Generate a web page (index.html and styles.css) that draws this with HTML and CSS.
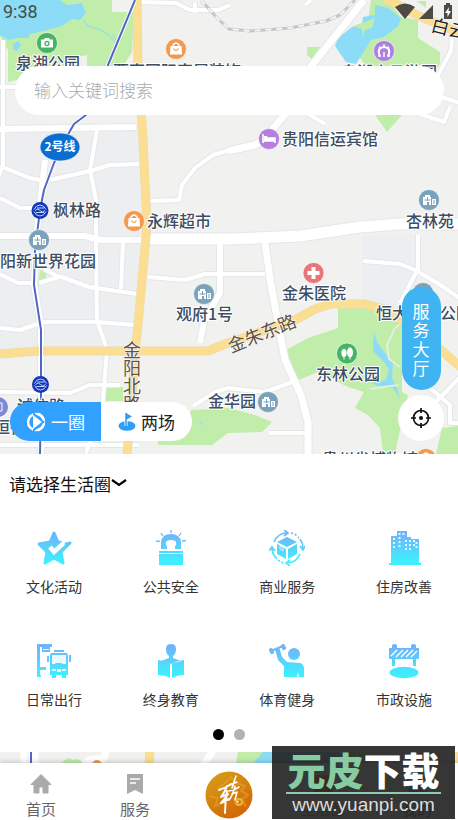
FILE: index.html
```html
<!DOCTYPE html>
<html lang="zh-CN">
<head>
    <meta charset="UTF-8">
    <meta name="viewport" content="width=device-width, initial-scale=1.0">
    <title>生活圈</title>
    <link rel="stylesheet" href="styles.css">
</head>
<body>
<div class="app">

    <!-- Map -->
    <svg class="map" viewBox="0 0 458 820" preserveAspectRatio="xMidYMin slice" aria-hidden="true">
        <defs>
            <linearGradient id="sky" gradientUnits="userSpaceOnUse" x1="0" y1="0" x2="0" y2="36">
                <stop offset="0.1" stop-color="#70b4fa"/>
                <stop offset="0.9" stop-color="#3df0ff"/>
            </linearGradient>
            <g id="building">
                <circle r="10.5" fill="#7aa3bb" stroke="#fff" stroke-width="0.6"/>
                <path fill="#fff" d="M-6 5V-3h2v-2h5v2h1V5h-2V2h-2v3zM3 5V-1h4V5z"/>
                <path stroke="#7aa3bb" d="M-4.500 0h6M-1.500-3v4M4 1h2M4 3h2" fill="none"/>
            </g>
            <g id="bag">
                <circle r="10.500" fill="#f29a50" stroke="#fff" stroke-width="0.6"/>
                <path fill="#fff" d="M-5.500-3h11l.5 8.500h-12z"/>
                <path d="M-3-3v-1q3-4 6 0v1" stroke="#fff" stroke-width="1.300" fill="none"/>
                <path d="M-2.500-.5q2.500 4 5 0" stroke="#f29a50" stroke-width="1.200" fill="none"/>
            </g>
            <g id="metro">
                <circle r="8.500" fill="#1136b8"/>
                <path d="M-6-1q2-4.500 6-4.500T6-1M-6 1q2 4.500 6 4.500T6 1M-5 0q3-3 5 0t5 0M-4 2h8M-3-2.500h7" stroke="#c5d3ff" fill="none"/>
            </g>
        </defs>

        <rect width="458" height="820" fill="#f1f1f0"/>
        <path fill="#eceef0" d="M0 130h137l12 70-3 60-12 90H0zM362 235h56v90h-56z"/>

        <!-- Parks -->
        <g fill="#c0edaa">
            <path d="M0 0h112v12h22l-2 40-14 22-31-8V55l-10 2v9L8 82V50L0 36z"/>
            <path d="M371 0h17l13 17 17 3v18l22 14v12l-12 14h-55l-20-31-8-2 24-30z"/>
            <path d="M307 47h13l-8 12-5-4zM375 115h27l-15 17zM417 1h9v7z"/>
            <path d="M338 308h40l24 14v70l6 3-13 58h-12l-3-25-12-13-13-7 9-16-16-5-30-15-20 8-12-30 22-12 30-10z"/>
            <path d="M442 428l16-2v28h-22zM192 410l36-2 27 7 17 7-10 10-34 1-16 12h-54v-7zM106 387h17v14h-18zM40 270l7 1-2 12-7 3zM60 764l5-4 4-2 4 2 5-1 6 5zM238 751h130v14H236z"/>
        </g>

        <!-- Water -->
        <g fill="#8cdcf8">
            <path d="M0 0h60l7 5 15-2 4 10-6 7-8-1-10 7-15 4-17 4-2 4H18L8 40 0 35zM13 44l5-3 3 4-4 6-4-2z"/>
            <path d="M375 5l13 3 13 10-3 8-14 11-13 3-3 5-12 19-10-2-11-16 3-8 14-11 10-3 1-7 12-2z"/>
            <path d="M374 331q2 13 11 22l8 9-1 16 4 8 4 13-7-11-15-2-6-3 14-3 3-11-5-7-11-11zM254 762l10-11h76v14h-86z"/>
        </g>
        <path d="M83 20l5 6 11 3 10 6 7 9M113 34l4 9M199 421l4 4" stroke="#8cdcf8" fill="none"/>
        <path fill="#c0edaa" d="M365 22l10-4-3 10-7 2-2 8-1-9-9-3z"/>
        <path d="M403 322l-8 6-8 17 2 14 11 8M370 389l28-4" stroke="#e4efdb" stroke-width="2" fill="none"/>

        <!-- Streets, grey edge first and then the white surface -->
        <g fill="none" stroke-linejoin="round">
            <g stroke="#e5e6e8">
                <path stroke-width="6" d="M3 40v125l-5 12M0 87h15M0 166l30 12 15 3 45-10 20-6 29-1M97 130l-7 40 6 30v50l1 70 10 30-4 50-5 20-12 33M0 198l20 10h15M0 274l18 9h18M39 283l20-6-15-8M59 276l30 11 48 7M123 242l-2 47M0 328l20 2 24-8h52l39 3M0 392l70 1 20-8h30M0 445h139M148 277l37 3 20-6h60M230 150l-17 5-18 13-13 17-3 15-29 1M193 406l22-14 13-4 37 4 27-10M269 433h37M363 261l37 3 15 6 24 14 22 15M418 235v34l-18 34M430 388l20 17v18h8M436 402l24-25M141 2l35 1 14 7h28l12-5M195 3v10M311 0l-6 5M305 112l20 12M420 114l24 8 6-15M452 35l-1 16-14 26M438 96l22 7"/>
                <path stroke-width="8" d="M45 160l-8 70-3 53 7 45v126M0 129l136-2M0 236h85l15 4h47M220 243v50l-16 28-4 22"/>
                <path stroke-width="9" d="M228 151l27-6 12-9 19-23 26-48 52-65M265 243l6 42 14 75 16 35 7 27v32"/>
                <path stroke-width="13" d="M150 239h80l70-3 60-9 40-3h58"/>
            </g>
            <g stroke="#fff">
                <path stroke-width="4" d="M3 40v125l-5 12M0 87h15M0 166l30 12 15 3 45-10 20-6 29-1M97 130l-7 40 6 30v50l1 70 10 30-4 50-5 20-12 33M0 198l20 10h15M0 274l18 9h18M39 283l20-6-15-8M59 276l30 11 48 7M123 242l-2 47M0 328l20 2 24-8h52l39 3M0 392l70 1 20-8h30M0 445h139M148 277l37 3 20-6h60M230 150l-17 5-18 13-13 17-3 15-29 1M193 406l22-14 13-4 37 4 27-10M269 433h37M363 261l37 3 15 6 24 14 22 15M418 235v34l-18 34M430 388l20 17v18h8M436 402l24-25M141 2l35 1 14 7h28l12-5M195 3v10M311 0l-6 5M305 112l20 12M420 114l24 8 6-15M452 35l-1 16-14 26M438 96l22 7"/>
                <path stroke-width="6" d="M45 160l-8 70-3 53 7 45v126M0 129l136-2M0 236h85l15 4h47M220 243v50l-16 28-4 22"/>
                <path stroke-width="7" d="M228 151l27-6 12-9 19-23 26-48 52-65M265 243l6 42 14 75 16 35 7 27v32M24 750v15M35 750v15M84 764l4-4 16-2 3-8M203 765l10-14"/>
                <path stroke-width="11" d="M150 239h80l70-3 60-9 40-3h58"/>
            </g>
        </g>

        <!-- Railway -->
        <path d="M201 0l16 18 12 11 21 2 40-3 36-7 14-6 15-15" stroke="#c5c5ca" stroke-width="3" fill="none"/>
        <path d="M201 0l16 18 12 11 21 2 40-3 36-7 14-6 15-15" stroke="#f5f5f5" stroke-width="2" stroke-dasharray="6 5" fill="none"/>

        <!-- Main roads -->
        <g fill="none" stroke-linejoin="round">
            <path d="M137 0l1 66 5 74 4 85-9 100-4 35-2 40-5 54M0 354l36-3h172l20-8 67-23 20-11 16-5h34l22 6 35 24 41 35M385-2l34 18 41 17M150 750l-1 15M460 750v15" stroke="#ecd9a9" stroke-width="9"/>
            <path d="M137 0l1 66 5 74 4 85-9 100-4 35-2 40-5 54M0 354l36-3h172l20-8 67-23 20-11 16-5h34l22 6 35 24 41 35M385-2l34 18 41 17M150 750l-1 15M460 750v15" stroke="#fbde91" stroke-width="8"/>
            <path d="M135 0l-27 65v20l-22 30-12 9-8 14-12 25-10 27-4 20-5 40-1 35 7 45v70l-1 54M31 750v15" stroke="#fff" stroke-width="4"/>
            <path d="M135 0l-27 65v20l-22 30-12 9-8 14-12 25-10 27-4 20-5 40-1 35 7 45v70l-1 54M31 750v15" stroke="#5267c4" stroke-width="2"/>
        </g>

        <!-- Points of interest -->
        <g transform="translate(47 43)">
            <circle r="10.500" fill="#47b365" stroke="#fff" stroke-width="0.6"/>
            <path fill="#fff" d="M-6-3.500h3L-2-5h4l1 1.500h3v8H-6z"/>
            <circle cy=".5" r="2" fill="none" stroke="#47b365" stroke-width="1.300"/>
        </g>
        <g transform="translate(384 51)">
            <circle r="10.500" fill="#af7fe0" stroke="#fff" stroke-width="0.6"/>
            <path d="M-4 5q-4-8 4-9 8 1 4 9" stroke="#fff" stroke-width="2" fill="none"/>
            <path d="M-6 1h2M-5-4l2 1M0-7v2M5-4l-2 1M6 1H4M0 1v5M-6 5h3M6 5H3" stroke="#fff" stroke-width="1.500"/>
        </g>
        <g transform="translate(269 139)">
            <circle r="10.500" fill="#b57fe0" stroke="#fff" stroke-width="0.6"/>
            <path d="M-6-5v9M-6 2H6v2M6 2v-3H-1" stroke="#fff" stroke-width="1.600" fill="none"/>
            <path fill="#fff" d="M-5-3h3l1 2h6v3H-5z"/>
        </g>
        <g transform="translate(313.500 273)">
            <circle r="10.500" fill="#e87579" stroke="#fff" stroke-width="0.6"/>
            <path d="M-6 0H6M0-6V6" stroke="#fff" stroke-width="4"/>
        </g>
        <g transform="translate(347 353.500)">
            <circle r="10.500" fill="#47b365" stroke="#fff" stroke-width="0.6"/>
            <ellipse cx="-3" cy="-.5" rx="2.600" ry="4" fill="#fff"/>
            <ellipse cx="3" cy="-1" rx="3" ry="5" fill="#fff"/>
            <path d="M-3 3v3M3 3v3" stroke="#fff"/>
        </g>
        <use href="#bag" x="176" y="49"/>
        <use href="#bag" x="134" y="221"/>
        <use href="#bag" x="426" y="459"/>
        <use href="#building" x="429" y="200"/>
        <use href="#building" x="39" y="240"/>
        <use href="#building" x="204" y="294"/>
        <use href="#building" x="268" y="402"/>
        <use href="#building" x="423" y="293"/>
        <use href="#metro" x="40" y="210.500"/>
        <use href="#metro" x="40.500" y="384.500"/>
        <circle cx="-2" cy="407" r="10" fill="#7c88d3"/>
        <path d="M0 403h2v8H0" stroke="#fff" fill="none"/>
        <circle cx="97" cy="765" r="5" fill="#f29a50"/>
        <ellipse cx="60" cy="147" rx="20" ry="14" fill="#0c6dd0" stroke="#fff" stroke-width="0.6"/>
        <text class="line-label" x="60" y="151" text-anchor="middle">2号线</text>

        <g class="place">
            <text x="16" y="69">泉湖公园</text>
            <text x="113" y="77">西南国际家居装饰</text>
            <text x="341" y="78">泉湖小云游园</text>
            <text x="282" y="145">贵阳信运宾馆</text>
            <text x="53" y="216">枫林路</text>
            <text x="147" y="227">永辉超市</text>
            <text x="406" y="227">杏林苑</text>
            <text x="-16" y="267">贵阳新世界花园</text>
            <text x="282" y="299">金朱医院</text>
            <text x="176" y="320">观府1号</text>
            <text x="376" y="319">恒大中央公园</text>
            <text x="316" y="380">东林公园</text>
            <text x="208" y="407">金华园</text>
            <text x="17" y="412">诚信路</text>
            <text x="-6" y="433">恒德</text>
            <text x="322" y="465">贵州省博物馆</text>
        </g>
        <g class="road-name">
            <text class="down" x="132" y="341">金阳北路</text>
            <text transform="translate(231 353) rotate(-22)">金朱东路</text>
            <text class="major" transform="translate(430 31) rotate(14)">白云路</text>
        </g>
    </svg>

    <!-- Status bar -->
    <div class="status">
        <span>9:38</span>
        <svg class="status-icons" viewBox="0 0 60 18" aria-hidden="true">
            <path fill="#4d4a45" d="M0 5q10-7 20 0L10 17zM38 3v14H24zM49 3h2V1h4v2h2v14h-8z"/>
            <path fill="#fff" d="M54 5l-4 6h2.500v4l3.500-6h-2.500z"/>
        </svg>
    </div>

    <main class="content">
        <input class="search" type="search" placeholder="输入关键词搜索" aria-label="输入关键词搜索">

        <div class="map-tools">
            <div class="switch">
                <button class="switch-item active" type="button">
                    <svg width="20" height="20" viewBox="0 0 20 20" aria-hidden="true">
                        <circle cx="10" cy="10" r="8" fill="none" stroke="#fff" stroke-width="2.500"/>
                        <path d="M7 0v20L19 10z" fill="#32a0ff"/>
                        <path d="M12 1.500q5 2 6 7M12 18.500q5-2 6-7" stroke="#fff" stroke-width="2" fill="none"/>
                        <path d="M7 3l9 7-9 7z" fill="#fff"/>
                    </svg>
                    一圈
                </button>
                <button class="switch-item" type="button">
                    <svg width="18" height="20" viewBox="0 0 18 20" aria-hidden="true">
                        <ellipse cx="9" cy="14" rx="8.500" ry="4.800" fill="#2f9cf5"/>
                        <path d="M8 14V1" stroke="#fff" stroke-width="3"/>
                        <path d="M8 14V1" stroke="#2f9cf5" stroke-width="1.500"/>
                        <path d="M8 1l6 3.500L8 8z" fill="#2f9cf5"/>
                    </svg>
                    两场
                </button>
            </div>
            <div class="side">
                <button class="hall" type="button">服务大厅</button>
                <button class="locate" type="button" aria-label="定位">
                    <svg width="22" height="22" viewBox="0 0 22 22" aria-hidden="true">
                        <circle cx="11" cy="11" r="7.500" fill="none" stroke="#111" stroke-width="1.700"/>
                        <path d="M11 1v5M11 16v5M1 11h5M16 11h5" stroke="#111" stroke-width="1.700"/>
                        <circle cx="11" cy="11" r="2" fill="#111"/>
                    </svg>
                </button>
            </div>
        </div>
    </main>

    <!-- Services -->
    <section class="panel">
        <label class="circle-picker">
            <select aria-label="请选择生活圈">
                <option>请选择生活圈</option>
            </select>
            <svg width="16" height="10" viewBox="0 0 16 10" aria-hidden="true">
                <path d="M1 2l7 5 7-5" fill="none" stroke="#000" stroke-width="2.200"/>
            </svg>
        </label>

        <div class="services">
            <a class="service" href="#">
                <svg viewBox="0 0 36 36" aria-hidden="true">
                    <path fill="url(#sky)" stroke="url(#sky)" stroke-width="3" stroke-linejoin="round" d="M18 3l4 9 11 2-8 8 2 11-9-5-9 5 2-11-8-8 11-2z"/>
                    <path d="M14 17l4 5L32 9" stroke="#fff" stroke-width="4.500" fill="none"/>
                    <path d="M30 14l4-1" stroke="url(#sky)" stroke-width="3" stroke-linecap="round"/>
                </svg>
                文化活动
            </a>
            <a class="service" href="#">
                <svg viewBox="0 0 36 36" aria-hidden="true">
                    <path fill="url(#sky)" d="M6 21h24v14H6zM8 19V12q1-8 10-8t10 8v7h-6v-3q2-1 1-4-1-2-5-2t-5 2q-1 3 1 4v3z"/>
                    <path d="M6 23.500h24" stroke="#fff"/>
                    <path d="M3 11l4 0.500M29 11l4-.5M8 3l2 3M28 3l-2 3M18 0v3" stroke="url(#sky)" stroke-width="1.300"/>
                </svg>
                公共安全
            </a>
            <a class="service" href="#">
                <svg viewBox="0 0 36 36" aria-hidden="true">
                    <path fill="url(#sky)" d="M18 7l10 5-10 5-10-5zM8 14l9 5v10l-9-5zM28 14l-9 5v10l9-5z"/>
                    <path d="M11 16l3 2v3l-3-2z" fill="none" stroke="#d9f8ff"/>
                    <g fill="none" stroke="url(#sky)" stroke-width="1.700">
                        <path d="M5 12Q9 3 18 3M31 9q3 4 3 9M31 24q-3 8-12 9M3 18q0 6 5 11"/>
                        <path stroke-dasharray="2 2" d="M22 3q5 1 8 5M9 30q4 3 7 3"/>
                        <path d="M15 0l4 3-4 3M31 16l3 4 2-4M21 30l-4 3 4 3M0 21l3-4 3 4"/>
                    </g>
                </svg>
                商业服务
            </a>
            <a class="service" href="#">
                <svg viewBox="0 0 36 36" aria-hidden="true">
                    <path fill="url(#sky)" d="M5 33V6h6V1h10v6h4v2h8v24h2v2H3v-2z"/>
                    <path stroke="#e6faff" stroke-width="2" fill="none" stroke-dasharray="2 2" d="M13.500 3v14M17.500 3v3M8 8v10M20 10v12M24 10v12M28 10v8M30.500 12v8"/>
                </svg>
                住房改善
            </a>
            <a class="service" href="#">
                <svg viewBox="0 0 36 36" aria-hidden="true">
                    <path fill="url(#sky)" d="M1 1h15v3H4v20h6v3H4v5h1v2H1zM6 4h8v5H6zM18 7h10v2H18zM15 10h16l1 3v19h-2v3h-4v-3h-6v3h-4v-3h-2V12zM11 13h2v6h-2zM33 12h2v7h-2z"/>
                    <path fill="#e9f9ff" d="M16 12h14v9h-3l-2-1h-5l-1 1h-3zM16 26h4v2h-4zM26 26h4v2h-4zM21 26h4v3h-4zM7 6h6v1H7z"/>
                </svg>
                日常出行
            </a>
            <a class="service" href="#">
                <svg viewBox="0 0 36 36" aria-hidden="true">
                    <path fill="url(#sky)" d="M18 1q5 0 5 5 0 5-3 7v2l8 3-10 3-10-3 8-3v-2q-3-2-3-7 0-5 5-5zM5 17q8 1 12 4v14q-5-3-12-3zM31 17q-8 1-12 4v14q5-3 12-3z"/>
                </svg>
                终身教育
            </a>
            <a class="service" href="#">
                <svg viewBox="0 0 36 36" aria-hidden="true">
                    <circle cx="25" cy="11" r="6" fill="url(#sky)"/>
                    <path fill="url(#sky)" d="M6 6l4-2 3 10 5 5 13 1q4 1 4 6v8h-5l-1-5-1 5H15V23L9 17z"/>
                    <g stroke="url(#sky)" stroke-linecap="round">
                        <path d="M2 8l12-5" stroke-width="2"/>
                        <path d="M2 7l1 2M14 3l1 2" stroke-width="4"/>
                    </g>
                </svg>
                体育健身
            </a>
            <a class="service" href="#">
                <svg viewBox="0 0 36 36" aria-hidden="true">
                    <path fill="url(#sky)" d="M6 2q3-2 5 0v3h14V2q3-2 5 0v3h3v11h-3v7h-3v-7H9v7H6v-7H3V5h3z"/>
                    <path d="M5 13l6-6M10 14l7-7M15 14l7-7M20 14l7-7M25 14l6-6" stroke="#fff" stroke-width="1.400" fill="none"/>
                    <ellipse cx="18" cy="29.500" rx="14.500" ry="5.700" fill="url(#sky)"/>
                </svg>
                市政设施
            </a>
        </div>

        <div class="dots">
            <button class="dot current" type="button" aria-label="第1页"></button>
            <button class="dot" type="button" aria-label="第2页"></button>
        </div>
    </section>

    <!-- Tab bar -->
    <nav class="tabs">
        <a class="tab" href="#">
            <svg width="22" height="22" viewBox="0 0 22 22" aria-hidden="true">
                <path fill="#aaa" stroke="#aaa" stroke-linejoin="round" d="M11 1.500l10 10h-3V20h-5v-6H9v6H4v-8.500H1z"/>
            </svg>
            首页
        </a>
        <a class="tab" href="#">
            <svg width="22" height="22" viewBox="0 0 22 22" aria-hidden="true">
                <path fill="#aaa" d="M3 1h16v20l-8-4-8 4z"/>
                <path d="M6 6h10M6 10h6" stroke="#fff" stroke-width="1.500"/>
            </svg>
            服务
        </a>
        <a class="tab logo" href="#" aria-label="主页">
            <svg width="48" height="48" viewBox="0 0 48 48" aria-hidden="true">
                <defs>
                    <linearGradient id="gold" x1="0" y1="0" x2="0.600" y2="1">
                        <stop offset="0" stop-color="#d6a315"/>
                        <stop offset="1" stop-color="#d36708"/>
                    </linearGradient>
                </defs>
                <circle cx="24" cy="24" r="23.500" fill="url(#gold)"/>
                <path d="M4 25l9 2-3 8 9-4M13 18l8-7 5-5 5 6 9 3-4 5 7 4-6 4 4 8" stroke="#e7ae45" stroke-opacity=".45" stroke-width="2" fill="none"/>
                <g stroke="#fff" fill="none" stroke-linecap="round" stroke-linejoin="round">
                    <path stroke-width="2" d="M14 19q7-2 12-6M22 15q-2 6-6 11l7-3q-3 5-7 9l8-4M22 20q-2 12-2 22"/>
                    <path stroke-width="1.600" d="M31 5q-2 6-4 12M25 14l7-3M24 20q6-1 10-4M30 15q-2 9-6 14M27 23l5-2-2 8M30 28l3 3"/>
                </g>
                <circle cx="34" cy="31" r="3" fill="none" stroke="#f3b43a" stroke-width="1.800"/>
            </svg>
        </a>
        <a class="tab selected" href="#">
            <svg width="22" height="22" viewBox="0 0 22 22" aria-hidden="true">
                <path fill="#f39a1d" d="M2 2h18v18H2z"/>
            </svg>
            生活圈
        </a>
        <a class="tab" href="#">
            <svg width="22" height="22" viewBox="0 0 22 22" aria-hidden="true">
                <circle cx="11" cy="6" r="5" fill="#aaa"/>
                <path fill="#aaa" d="M1 21q0-9 10-9t10 9z"/>
            </svg>
            我的
        </a>
    </nav>

    <div class="stamp">
        <div class="stamp-name"><span>元皮</span>下载</div>
        <div class="stamp-url">www.yuanpi.com</div>
    </div>
</div>
</body>
</html>
```

FILE: styles.css
```css
* {
    box-sizing: border-box;
}
body {
    margin: 0;
    font-family: "Noto Sans CJK SC", sans-serif;
    color: #333;
}
button, input, select {
    font-family: inherit;
    border: none;
    margin: 0;
    padding: 0;
}
a {
    color: inherit;
    text-decoration: none;
}
svg {
    display: block;
    flex: none;
}
.app {
    position: relative;
    display: flex;
    flex-direction: column;
    min-height: 100vh;
    overflow: hidden;
}

/* Map behind the page */
.map {
    position: absolute;
    top: 0;
    left: 0;
    width: 100%;
    height: 100%;
}
.place text {
    font-size: 16px;
    font-weight: 500;
    fill: #3d4d63;
    stroke: #fff;
    stroke-width: 2px;
    stroke-linejoin: round;
    paint-order: stroke;
}
.road-name text {
    font-size: 18px;
    fill: #5c5247;
    stroke: #fff;
    stroke-width: 1px;
    paint-order: stroke;
}
.road-name .down {
    writing-mode: vertical-rl;
}
.road-name .major {
    fill: #222;
}
.line-label {
    font-size: 12px;
    font-weight: 700;
    fill: #fff;
}

.status {
    position: relative;
    display: flex;
    justify-content: space-between;
    align-items: center;
    height: 22px;
    padding: 0 3px;
    font-family: Roboto, sans-serif;
    font-size: 18px;
    color: #454c46;
}
.status-icons {
    width: 60px;
    height: 18px;
}

.content {
    position: relative;
    flex: 1;
    display: flex;
    flex-direction: column;
    justify-content: space-between;
    gap: 160px;
    padding: 44px 14px 13px 10px;
}
.search {
    height: 49px;
    margin: 0 0 0 5px;
    padding: 0 19px 2px;
    border-radius: 25px;
    background: #fff;
    font-size: 17px;
    font-weight: 300;
    outline: none;
    appearance: none;
}
.search::placeholder {
    color: #aaa;
}
.map-tools {
    display: flex;
    justify-content: space-between;
    align-items: flex-end;
}
.switch {
    display: flex;
    height: 39px;
    border-radius: 20px;
    overflow: hidden;
}
.switch-item {
    display: flex;
    align-items: center;
    justify-content: center;
    gap: 5px;
    width: 91px;
    background: #fff;
    color: #222;
    font-size: 17px;
    cursor: pointer;
}
.switch-item.active {
    background: #32a0ff;
    color: #fff;
}
.side {
    display: flex;
    flex-direction: column;
    align-items: center;
    gap: 5px;
}
.hall {
    width: 39px;
    height: 103px;
    padding: 0 11px;
    border-radius: 20px;
    background: #40b4f2;
    color: #fff;
    font-size: 17px;
    line-height: 19px;
    cursor: pointer;
}
.locate {
    display: flex;
    align-items: center;
    justify-content: center;
    width: 46px;
    height: 46px;
    border-radius: 50%;
    background: #fff;
    cursor: pointer;
}

.panel {
    position: relative;
    margin-bottom: 11px;
    padding: 16px 0 12px;
    background: #fff;
}
.circle-picker {
    display: inline-flex;
    align-items: center;
    height: 26px;
    padding-left: 9px;
}
.circle-picker select {
    appearance: none;
    background: none;
    color: #111;
    font-size: 17px;
}
.services {
    display: grid;
    grid-template-columns: repeat(4, 58px);
    justify-content: space-between;
    row-gap: 46px;
    padding: 34px 25px 0;
}
.service {
    display: flex;
    flex-direction: column;
    align-items: center;
    gap: 9px;
    font-size: 14px;
    line-height: 22px;
    white-space: nowrap;
}
.service svg {
    width: 36px;
    height: 36px;
}
.dots {
    display: flex;
    justify-content: center;
    gap: 10px;
    margin-top: 19px;
}
.dot {
    width: 11px;
    height: 11px;
    border-radius: 50%;
    background: #b2b2b2;
}
.dot.current {
    background: #000;
}

.tabs {
    position: relative;
    display: flex;
    justify-content: space-between;
    align-items: flex-start;
    height: 57px;
    padding: 0 17px;
    background: #fff;
    box-shadow: 0 -1px 5px rgba(0, 0, 0, 0.2);
}
.tab {
    display: flex;
    flex-direction: column;
    align-items: center;
    gap: 4px;
    width: 48px;
    padding-top: 10px;
    font-size: 15px;
    line-height: 20px;
    color: #666;
    white-space: nowrap;
}
.tab.logo {
    padding-top: 8px;
}
.tab.selected {
    color: #f39a1d;
}

.stamp {
    position: absolute;
    right: 3px;
    bottom: 1px;
    width: 183px;
    height: 73px;
    padding: 2px 14px 0;
    background: rgba(32, 32, 32, 0.9);
    color: #fff;
    text-align: center;
}
.stamp-name {
    height: 46px;
    border-bottom: 2px solid #8fcbb0;
    font-size: 38px;
    font-weight: 900;
    line-height: 42px;
    white-space: nowrap;
}
.stamp-name span {
    color: #86cba2;
}
.stamp-url {
    font-family: "Liberation Sans", sans-serif;
    font-size: 19px;
    line-height: 21px;
    color: #ddd;
}
```
